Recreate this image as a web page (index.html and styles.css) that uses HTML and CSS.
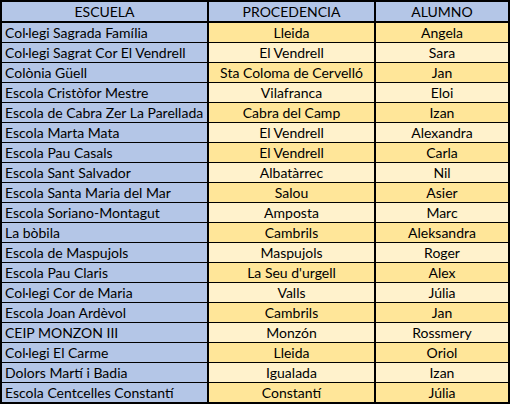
FILE: index.html
```html
<!DOCTYPE html>
<html lang="ca">
<head>
<meta charset="utf-8">
<title>Escoles</title>
<link rel="stylesheet" href="styles.css">
</head>
<body>
<div class="sheet">
  <div class="cell head">ESCUELA</div><div class="cell head">PROCEDENCIA</div><div class="cell head">ALUMNO</div>
  <div class="cell school">Col·legi Sagrada Família</div><div class="cell dark">Lleida</div><div class="cell dark">Angela</div>
  <div class="cell school">Col·legi Sagrat Cor El Vendrell</div><div class="cell light">El Vendrell</div><div class="cell light">Sara</div>
  <div class="cell school">Colònia Güell</div><div class="cell dark">Sta Coloma de Cervelló</div><div class="cell dark">Jan</div>
  <div class="cell school">Escola Cristòfor Mestre</div><div class="cell light">Vilafranca</div><div class="cell light">Eloi</div>
  <div class="cell school">Escola de Cabra Zer La Parellada</div><div class="cell dark">Cabra del Camp</div><div class="cell dark">Izan</div>
  <div class="cell school">Escola Marta Mata</div><div class="cell light">El Vendrell</div><div class="cell light">Alexandra</div>
  <div class="cell school">Escola Pau Casals</div><div class="cell dark">El Vendrell</div><div class="cell dark">Carla</div>
  <div class="cell school">Escola Sant Salvador</div><div class="cell light">Albatàrrec</div><div class="cell light">Nil</div>
  <div class="cell school">Escola Santa Maria del Mar</div><div class="cell dark">Salou</div><div class="cell dark">Asier</div>
  <div class="cell school">Escola Soriano-Montagut</div><div class="cell light">Amposta</div><div class="cell light">Marc</div>
  <div class="cell school">La bòbila</div><div class="cell dark">Cambrils</div><div class="cell dark">Aleksandra</div>
  <div class="cell school">Escola de Maspujols</div><div class="cell light">Maspujols</div><div class="cell light">Roger</div>
  <div class="cell school">Escola Pau Claris</div><div class="cell dark">La Seu d'urgell</div><div class="cell dark">Alex</div>
  <div class="cell school">Col·legi Cor de Maria</div><div class="cell light">Valls</div><div class="cell light">Júlia</div>
  <div class="cell school">Escola Joan Ardèvol</div><div class="cell dark">Cambrils</div><div class="cell dark">Jan</div>
  <div class="cell school">CEIP MONZON III</div><div class="cell light">Monzón</div><div class="cell light">Rossmery</div>
  <div class="cell school">Col·legi El Carme</div><div class="cell dark">Lleida</div><div class="cell dark">Oriol</div>
  <div class="cell school">Dolors Martí i Badia</div><div class="cell light">Igualada</div><div class="cell light">Izan</div>
  <div class="cell school">Escola Centcelles Constantí</div><div class="cell dark">Constantí</div><div class="cell dark">Júlia</div>
</div>
</body>
</html>
```
FILE: styles.css
```css
html, body {
  margin: 0;
  padding: 0;
  background: #fff;
}
.sheet {
  width: 510px;
  box-sizing: border-box;
  padding: 2px;
  background: #000;
  display: grid;
  grid-template-columns: 205px 165px 132px;
  grid-auto-rows: 19px;
  grid-template-rows: 20px;
  column-gap: 2px;
  row-gap: 1px;
  font-family: "Lato", "Liberation Sans", sans-serif;
  font-size: 14px;
  color: #000;
}
.cell {
  display: flex;
  align-items: center;
  justify-content: center;
  white-space: nowrap;
  overflow: hidden;
  line-height: 1;
  box-sizing: border-box;
  padding-top: 1px;
}
.head {
  background: #b4c6e7;
  border-bottom: 1px solid #000;
  padding-top: 0;
}
.school {
  background: #b4c6e7;
  justify-content: flex-start;
  padding-left: 3px;
}
.dark {
  background: #ffe699;
}
.light {
  background: #fff2cc;
}
```
